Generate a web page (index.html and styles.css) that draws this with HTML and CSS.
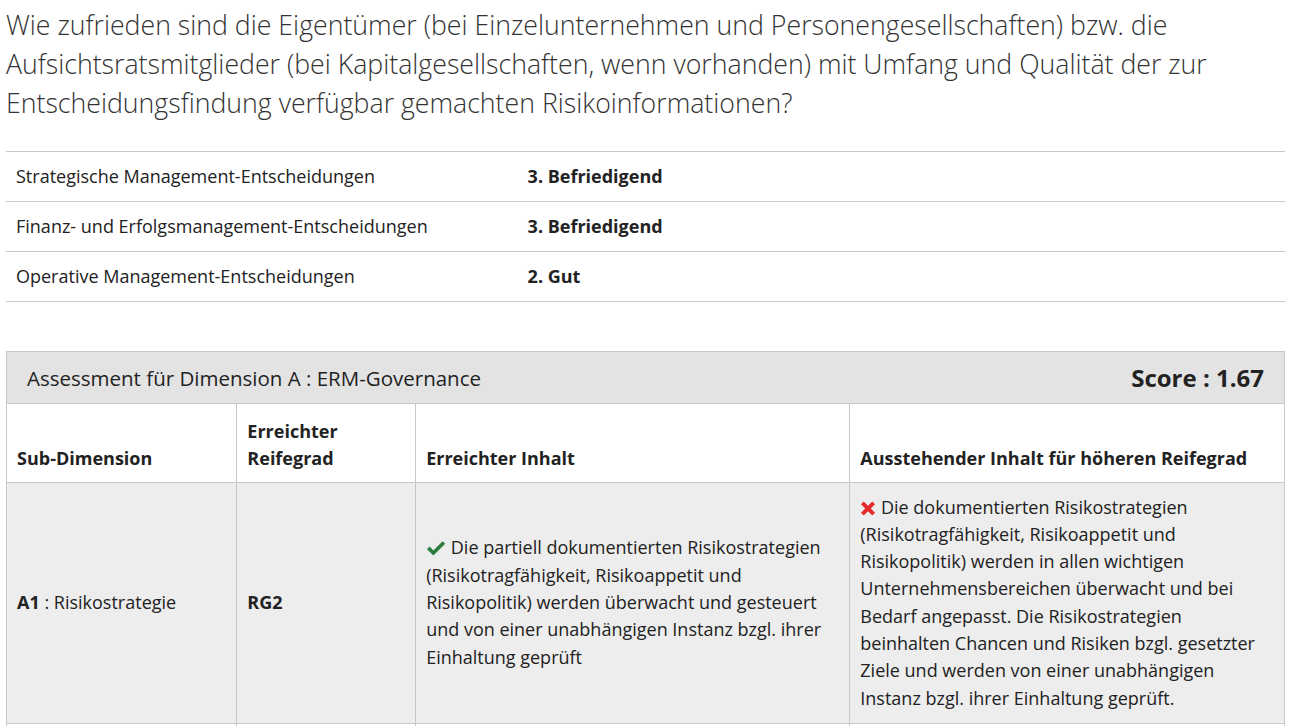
FILE: index.html
```html
<!DOCTYPE html>
<html lang="de">
<head>
<meta charset="utf-8">
<link rel="stylesheet" href="styles.css">
</head>
<body>
<div class="page">
  <h2 class="question">Wie zufrieden sind die Eigentümer (bei Einzelunternehmen und Personengesellschaften) bzw. die Aufsichtsratsmitglieder (bei Kapitalgesellschaften, wenn vorhanden) mit Umfang und Qualität der zur Entscheidungsfindung verfügbar gemachten Risikoinformationen?</h2>

  <table class="answers">
    <tr><td class="label">Strategische Management-Entscheidungen</td><td class="value">3. Befriedigend</td></tr>
    <tr><td class="label">Finanz- und Erfolgsmanagement-Entscheidungen</td><td class="value">3. Befriedigend</td></tr>
    <tr><td class="label">Operative Management-Entscheidungen</td><td class="value">2. Gut</td></tr>
  </table>

  <div class="panel">
    <div class="panel-head">
      <span class="panel-title">Assessment für Dimension A : ERM-Governance</span>
      <span class="score">Score : 1.67</span>
    </div>
    <table class="assess">
      <thead>
        <tr>
          <th class="c1">Sub-Dimension</th>
          <th class="c2">Erreichter Reifegrad</th>
          <th class="c3">Erreichter Inhalt</th>
          <th class="c4">Ausstehender Inhalt für höheren Reifegrad</th>
        </tr>
      </thead>
      <tbody>
        <tr>
          <td><b>A1</b> : Risikostrategie</td>
          <td><b>RG2</b></td>
          <td><svg class="icon ok" viewBox="0 0 20 16" width="20" height="16"><path d="M1 9.2 L3.6 6.6 L7.4 10.4 L16.6 1.2 L19.2 3.8 L7.4 15.6 Z" fill="#2a7d3c"/></svg> Die partiell dokumentierten Risikostrategien (Risikotragfähigkeit, Risikoappetit und Risikopolitik) werden überwacht und gesteuert und von einer unabhängigen Instanz bzgl. ihrer Einhaltung geprüft</td>
          <td><svg class="icon no" viewBox="0 0 16 16" width="16" height="15"><path d="M0.5 3.5 L3.5 0.5 L8 5 L12.5 0.5 L15.5 3.5 L11 8 L15.5 12.5 L12.5 15.5 L8 11 L3.5 15.5 L0.5 12.5 L5 8 Z" fill="#e52b2b"/></svg> Die dokumentierten Risikostrategien (Risikotragfähigkeit, Risikoappetit und Risikopolitik) werden in allen wichtigen Unternehmensbereichen überwacht und bei Bedarf angepasst. Die Risikostrategien beinhalten Chancen und Risiken bzgl. gesetzter Ziele und werden von einer unabhängigen Instanz bzgl. ihrer Einhaltung geprüft.</td>
        </tr>
        <tr class="next">
          <td></td><td></td><td></td><td></td>
        </tr>
      </tbody>
    </table>
  </div>
</div>
</body>
</html>
```

FILE: styles.css
```css
html, body {
  margin: 0;
  padding: 0;
  background: #fff;
}
body {
  font-family: "Open Sans", "Noto Sans", sans-serif;
  color: #222;
  font-size: 18px;
  overflow: hidden;
}
.page {
  padding: 0 6px;
}
.question {
  font-weight: 300;
  font-size: 26.7px;
  line-height: 39px;
  margin: 0;
  padding-top: 5px;
  color: #333;
}
.answers {
  width: 100%;
  border-collapse: collapse;
  margin-top: 29px;
}
.answers td {
  border-top: 1px solid #c8c8c8;
  border-bottom: 1px solid #c8c8c8;
  padding: 11px 10px;
  line-height: 27px;
  height: 27px;
}
.answers td.label {
  width: 40%;
}
.answers td.value {
  font-weight: 700;
}
.panel {
  margin-top: 49px;
  border: 1px solid #c8c8c8;
}
.panel-head {
  background: #e3e3e3;
  display: flex;
  justify-content: space-between;
  align-items: center;
  height: 51px;
  padding: 0 20px;
  border-bottom: 1px solid #c8c8c8;
}
.panel-title {
  font-size: 20.5px;
  color: #222;
}
.score {
  font-size: 24px;
  font-weight: 700;
  color: #222;
}
.assess {
  width: 100%;
  border-collapse: collapse;
  table-layout: fixed;
}
.assess th, .assess td {
  box-sizing: border-box;
  border-left: 1px solid #c8c8c8;
  border-bottom: 1px solid #c8c8c8;
  padding: 10px 10px;
  line-height: 27px;
  text-align: left;
}
.assess th:first-child, .assess td:first-child {
  border-left: none;
}
.assess th {
  vertical-align: bottom;
  font-weight: 700;
  background: #fff;
  height: 78px;
}
.assess td {
  background: #ededed;
  vertical-align: middle;
  padding: 11px 10px;
  line-height: 27.3px;
}
.c1 { width: 18%; }
.c2 { width: 14%; }
.c3 { width: 34%; }
.c4 { width: 34%; }
.icon {
  vertical-align: -2px;
}
.assess .next td {
  height: 40px;
  background: #fff;
}
```
